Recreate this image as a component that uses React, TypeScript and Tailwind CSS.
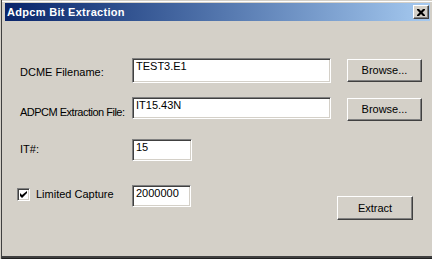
import React from "react";

const font = { fontFamily: '"Liberation Sans", Arial, sans-serif' };

function TextBox({ value, w, h }: { value: string; w: string; h: string }) {
  return (
    <div
      className={`${w} ${h} shrink-0 bg-white border border-t-[#808080] border-l-[#808080] border-b-white border-r-white shadow-[inset_1px_1px_0_#404040,inset_-1px_-1px_0_#d4d0c8] pl-[3px] pt-[1px] text-[11px] leading-[13px] text-black`}
    >
      {value}
    </div>
  );
}

function Btn({ label, className }: { label: string; className: string }) {
  return (
    <div
      className={`${className} shrink-0 flex items-center justify-center bg-[#d4d0c8] border border-t-white border-l-white border-b-[#404040] border-r-[#404040] shadow-[inset_-1px_-1px_0_#808080] text-[11px] leading-[13px] text-black`}
    >
      {label}
    </div>
  );
}

export default function App() {
  return (
    <div
      style={font}
      className="w-[432px] h-[259px] bg-[#d4d0c8] flex flex-col overflow-hidden shadow-[inset_1px_0_0_#d4d0c8,inset_2px_0_0_#404040,inset_0_1px_0_#d4d0c8,inset_0_2px_0_#ffffff,inset_0_-1px_0_#202020,inset_0_-3px_0_#404040]"
    >
      {/* Title bar */}
      <div className="mt-[3px] ml-[5px] mr-[2px] h-[18px] shrink-0 flex items-center justify-between bg-gradient-to-r from-[#0a246a] to-[#a6caf0] pl-[2px] pr-[1px]">
        <span className="text-white font-bold text-[11px] leading-[13px] tracking-[0.3px]">
          Adpcm Bit Extraction
        </span>
        <div className="w-[16px] h-[14px] bg-[#d4d0c8] border border-t-white border-l-white border-b-[#404040] border-r-[#404040] shadow-[inset_-1px_-1px_0_#808080] flex items-center justify-center">
          <svg width="8" height="7" viewBox="0 0 8 7">
            <path d="M0 0h2l2 2 2-2h2v1L5.5 3.5 8 6v1H6L4 5 2 7H0V6l2.5-2.5L0 1z" fill="#000" />
          </svg>
        </div>
      </div>

      {/* Body */}
      <div className="flex flex-col pl-[20px]">
        {/* Row 1 */}
        <div className="mt-[37px] flex items-start">
          <div className="w-[112px] mt-[8px] text-[11px] leading-[13px] text-black">DCME Filename:</div>
          <TextBox value="TEST3.E1" w="w-[199px]" h="h-[25px]" />
          <Btn label="Browse..." className="ml-[16px] mt-[1px] w-[75px] h-[23px]" />
        </div>

        {/* Row 2 */}
        <div className="mt-[14px] flex items-start">
          <div className="w-[112px] mt-[9px] text-[11px] leading-[13px] tracking-[-0.5px] text-black whitespace-nowrap">
            ADPCM Extraction File:
          </div>
          <TextBox value="IT15.43N" w="w-[199px]" h="h-[22px]" />
          <Btn label="Browse..." className="ml-[16px] mt-[1px] w-[75px] h-[23px]" />
        </div>

        {/* Row 3 */}
        <div className="mt-[18px] flex items-start">
          <div className="w-[112px] mt-[4px] text-[11px] leading-[13px] text-black">IT#:</div>
          <TextBox value="15" w="w-[60px]" h="h-[22px]" />
        </div>

        {/* Row 4 */}
        <div className="mt-[24px] flex items-start">
          <div className="-ml-[3px] mt-[3px] w-[13px] h-[13px] shrink-0 bg-white border border-t-[#808080] border-l-[#808080] border-b-white border-r-white shadow-[inset_1px_1px_0_#404040,inset_-1px_-1px_0_#d4d0c8] flex items-center justify-center">
            <svg width="7" height="7" viewBox="0 0 7 7">
              <path d="M0 2v3l2 2 5-5V-0L2 4z" fill="#000" />
            </svg>
          </div>
          <div className="ml-[6px] w-[96px] mt-[3px] text-[11px] leading-[13px] text-black">Limited Capture</div>
          <TextBox value="2000000" w="w-[59px]" h="h-[22px]" />
          <Btn label="Extract" className="ml-auto mr-[19px] mt-[11px] w-[76px] h-[24px]" />
        </div>
      </div>
    </div>
  );
}
